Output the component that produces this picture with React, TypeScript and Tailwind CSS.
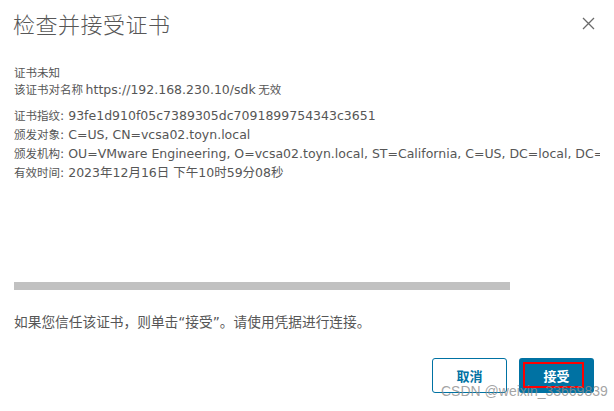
import React from 'react';

const cjk = { fontFamily: '"Noto Sans CJK SC", sans-serif' };
const latin = { fontFamily: '"DejaVu Sans", "Noto Sans CJK SC", sans-serif' };

const details: Array<[string, string]> = [
    ['证书指纹', '93fe1d910f05c7389305dc7091899754343c3651'],
    ['颁发对象', 'C=US, CN=vcsa02.toyn.local'],
    ['颁发机构', 'OU=VMware Engineering, O=vcsa02.toyn.local, ST=California, C=US, DC=local, DC=vsphere, CN=CA'],
    ['有效时间', '2023年12月16日 下午10时59分08秒'],
];

export default function App() {
    return (
        <div className="relative w-[614px] h-[411px] bg-white text-[#565656] overflow-hidden flex flex-col" style={cjk}>
            <div className="flex items-center justify-between pl-[13px] pr-[19px] pt-[2px] h-[44px]">
                <h3 className="text-[22px] font-light text-[#575757] leading-none tracking-[0.5px]">检查并接受证书</h3>
                <button className="w-[13px] h-[13px] text-[#6a6a6a]">
                    <svg viewBox="0 0 13 13" className="w-[13px] h-[13px]" fill="none" stroke="currentColor" strokeWidth="1.3">
                        <path d="M1 1 L12 12 M12 1 L1 12" />
                    </svg>
                </button>
            </div>

            <div className="ml-[14px] mr-[14px] mt-[20px] flex flex-col text-[11.5px] leading-[17px] whitespace-nowrap overflow-hidden">
                <div>证书未知</div>
                <div>
                    该证书对名称 <span className="text-[12.5px]" style={latin}>https://192.168.230.10/sdk</span> 无效
                </div>
                <div className="mt-[8px] leading-[18px]">
                    {details.map(([k, v]) => (
                        <div key={k}>
                            {k}
                            <span className="text-[12.5px]" style={latin}>: {v}</span>
                        </div>
                    ))}
                </div>
            </div>

            <div className="ml-[14px] mt-[100px] w-[496px] h-[8px] bg-[#c1c1c1]" />

            <p className="ml-[14px] mt-[22px] text-[13.7px] leading-[18px]">
                如果您信任该证书，则单击<span style={latin}>“</span>接受<span style={latin}>”</span>。请使用凭据进行连接。
            </p>

            <div className="mt-auto mb-[18px] mr-[20px] flex justify-end gap-[12px]">
                <button className="w-[75px] h-[35px] rounded-[3px] border border-[#0072a3] text-[#0072a3] text-[13px] font-semibold bg-white">
                    取消
                </button>
                <button className="relative w-[75px] h-[35px] rounded-[3px] bg-[#0072a3] text-white text-[13px] font-semibold flex items-center justify-center">
                    <span className="absolute left-[4px] top-[4px] w-[61px] h-[26px] border-2 border-[#ff0000]" />
                    接受
                </button>
            </div>

            <div
                className="absolute left-[441px] top-[384px] text-[14px] leading-none text-[#8c8c8c]/80"
                style={{ fontFamily: '"Liberation Sans", sans-serif' }}
            >
                CSDN @weixin_33669839
            </div>
        </div>
    );
}
